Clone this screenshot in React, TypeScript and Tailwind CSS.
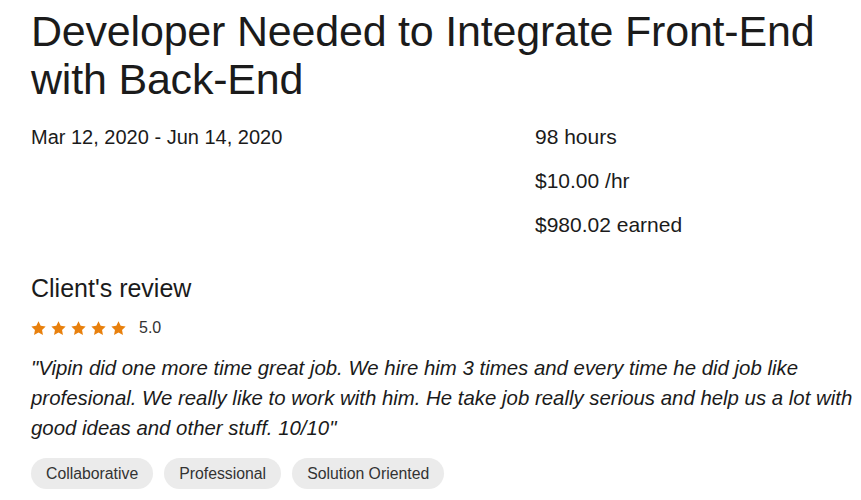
import { useEffect } from 'react'

const STAR = 'M12 1.8l3.1 6.4 7 .9-5.1 4.9 1.3 7L12 17.6 5.7 21l1.3-7-5.1-4.9 7-.9z'

function Star() {
  return (
    <svg viewBox="0 0 24 24" className="w-[17px] h-[17px] fill-[#e8800d]">
      <path d={STAR} />
    </svg>
  )
}

export default function App() {
  useEffect(() => {
    document.body.style.background = '#ffffff'
  }, [])

  const tags = ['Collaborative', 'Professional', 'Solution Oriented']

  return (
    <section className="min-h-screen bg-white text-[#1b1b1b] font-['Liberation_Sans',Arial,sans-serif]">
      <div className="pl-[31px] pr-[4px] pt-[7px]">

        {/* ================= TITULO ================= */}
        <h1 className="text-[43px] leading-[48px] font-normal tracking-[-0.2px]">
          Developer Needed to Integrate Front-End with Back-End
        </h1>

        {/* ================= DATAS / VALORES ================= */}
        <div className="grid grid-cols-[504px_1fr] mt-[22px] text-[20px] leading-[24px]">
          <p>Mar 12, 2020 - Jun 14, 2020</p>
          <div className="flex flex-col gap-[20px] text-[21px]">
            <p>98 hours</p>
            <p>$10.00 /hr</p>
            <p>$980.02 earned</p>
          </div>
        </div>

        {/* ================= REVIEW ================= */}
        <h2 className="mt-[36px] text-[25px] leading-[30px] font-normal">
          Client's review
        </h2>

        <div className="mt-[15px] flex items-center h-[20px]">
          <div className="flex gap-[3px] -ml-[1px]">
            {[0, 1, 2, 3, 4].map(i => (
              <Star key={i} />
            ))}
          </div>
          <span className="ml-[12px] text-[16px] text-[#333]">5.0</span>
        </div>

        <p className="mt-[15px] max-w-[826px] italic text-[20.4px] leading-[30px]">
          "Vipin did one more time great job. We hire him 3 times and every time he did job like
          profesional. We really like to work with him. He take job really serious and help us a lot with
          good ideas and other stuff. 10/10"
        </p>

        <div className="mt-[15px] flex gap-[11px]">
          {tags.map(tag => (
            <span
              key={tag}
              className="h-[31px] px-[15px] rounded-full bg-[#ebebeb] text-[#333] text-[15.8px] flex items-center"
            >
              {tag}
            </span>
          ))}
        </div>

      </div>
    </section>
  )
}
